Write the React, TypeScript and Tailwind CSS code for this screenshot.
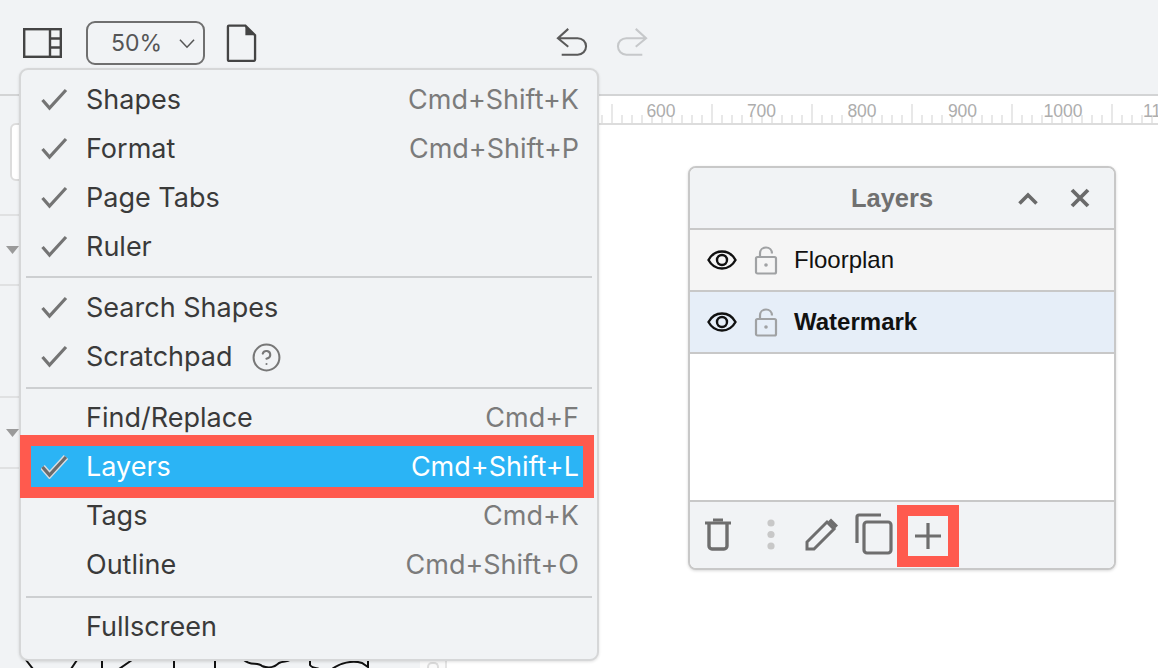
import { CircleHelp } from "lucide-react"

const inter = "font-['Inter',sans-serif]"
const arial = "font-['Liberation_Sans',Arial,sans-serif]"

function Check({ light }: { light?: boolean }) {
  return (
    <svg className="absolute left-[20px] top-[11px]" width="28" height="25" viewBox="0 0 28 25" fill="none">
      {light && <path d="M1.500 13l7 8L25 3" stroke="#d8dde2" strokeWidth="6" />}
      <path d="M1.500 13l7 8L25 3" stroke={light ? "#6b6b6b" : "#747474"} strokeWidth="3.200" />
    </svg>
  )
}

function MenuRow({ label, keys, checked, help }: { label: string; keys?: string; checked?: boolean; help?: boolean }) {
  return (
    <div className="relative flex h-[49px] items-center justify-between pl-[65px] pr-[18px] text-[#3a3a3a]">
      {checked && <Check />}
      <span className="flex items-center gap-[18px]">
        {label}
        {help && <CircleHelp size={31} strokeWidth={1.6} className="text-[#777]" />}
      </span>
      {keys && <span className="text-[#7b7b7b]">{keys}</span>}
    </div>
  )
}

function Separator({ className }: { className: string }) {
  return (
    <div className={`px-[5px] ${className}`}>
      <div className="h-[2px] w-full bg-[#cdcfd1]" />
    </div>
  )
}

function EyeIcon() {
  return (
    <svg width="30" height="22" viewBox="0 0 30 22" fill="none" stroke="#111" strokeWidth="2.400">
      <path d="M1.500 11C4.500 5.500 9.500 2.500 15 2.500S25.500 5.500 28.500 11C25.500 16.500 20.500 19.500 15 19.500S4.500 16.500 1.500 11Z" />
      <circle cx="15" cy="11" r="5" />
    </svg>
  )
}

function LockIcon() {
  return (
    <svg width="24" height="29" viewBox="0 0 24 29" fill="none" stroke="#a0a2a4" strokeWidth="2.200">
      <path d="M6 11V7.500C6 4 8.500 1.500 12 1.500S18 4 18 7.500" />
      <rect x="2" y="11" width="20" height="16.500" rx="1.500" />
      <circle cx="12" cy="19" r="1.800" fill="#a0a2a4" stroke="none" />
    </svg>
  )
}

function LayerRow({ name, active }: { name: string; active?: boolean }) {
  return (
    <div className={`flex h-[62px] items-center border-b-2 border-[#c8c8c8] pl-[17px] ${active ? "bg-[#e6eef8]" : "bg-[#f5f5f5]"}`}>
      <EyeIcon />
      <div className="ml-[17px] mr-[16px] pt-[1px]">
        <LockIcon />
      </div>
      <span className={`text-[24px] text-[#111] ${active ? "font-bold" : ""}`}>{name}</span>
    </div>
  )
}

function Toolbar() {
  return (
    <div className="flex h-[96px] items-start border-b-2 border-[#d3d4d5] bg-[#f1f3f5] pl-[23px]">
      <svg className="mt-[28px]" width="39" height="30" viewBox="0 0 39 30" fill="none" stroke="#444" strokeWidth="2.400">
        <rect x="1.200" y="1.200" width="36.600" height="27.600" />
        <path d="M27 1v28M27 10.500h11M27 19.500h11" />
      </svg>
      <div className={`ml-[24px] mt-[21px] flex h-[44px] w-[119px] items-center rounded-[9px] border-2 border-[#6f6f6f] pl-[23px] text-[23px] text-[#555] ${inter}`}>
        <span>50%</span>
        <svg className="ml-[17px]" width="16" height="11" viewBox="0 0 17 11" fill="none" stroke="#555" strokeWidth="1.600">
          <path d="M1 1.500l7.500 8 7.500-8" />
        </svg>
      </div>
      <svg className="ml-[21px] mt-[23px]" width="31" height="40" viewBox="0 0 32 40" fill="none">
        <path d="M3 2h17l10 10v25a1.500 1.500 0 0 1-1.500 1.500h-25A1.500 1.500 0 0 1 2 37V3a1 1 0 0 1 1-1Z" stroke="#444" strokeWidth="2.400" />
        <path d="M20 2l10 10H20Z" fill="#444" />
      </svg>
      <svg className="ml-[299px] mt-[27px]" width="32" height="30" viewBox="0 0 34 32" fill="none" stroke="#5a5a5a" strokeWidth="2.200">
        <path d="M13 2L2 12l11 9M2 12h21c5 0 9 3.500 9 8.500S28 29.500 23 29.500H6" />
      </svg>
      <svg className="ml-[28px] mt-[27px]" width="32" height="30" viewBox="0 0 34 32" fill="none" stroke="#c6c8ca" strokeWidth="2.200">
        <path d="M21 2l11 10-11 9M32 12H11c-5 0-9 3.500-9 8.500S6 29.500 11 29.500h17" />
      </svg>
    </div>
  )
}

function Ruler() {
  const ticks = Array.from({ length: 72 }, (_, i) => 452 + i * 10)
  const labels = [600, 700, 800, 900, 1000]
  return (
    <div className="h-[29px] border-b-2 border-[#dcdcdc] bg-white">
      <svg width="711" height="27" viewBox="447 0 711 27">
        {ticks.map((x) => {
          const major = (x - 412) % 100 === 0
          return <line key={x} x1={x} x2={x} y1={major ? 8 : 19} y2={27} stroke="#dedede" strokeWidth="1.400" />
        })}
        {labels.map((l, i) => (
          <text key={l} x={661 + i * 100.500} y={21} textAnchor="middle" fontSize="17.500" fill="#adadad" fontFamily="Liberation Sans">
            {l}
          </text>
        ))}
        <text x={1143} y={21} fontSize="17.500" fill="#adadad" fontFamily="Liberation Sans">
          1100
        </text>
      </svg>
    </div>
  )
}

function Sidebar() {
  return (
    <div className="flex h-full w-[420px] flex-col bg-[#f1f3f5]">
      <div className="h-[120px] border-b-2 border-[#e0e1e2] pl-[10px] pt-[27px]">
        <div className="h-[58px] w-[300px] rounded-[6px] border-2 border-[#dcdcdc] bg-white" />
      </div>
      <div className="flex h-[70px] items-center border-b-2 border-[#e0e1e2] pl-[6px]">
        <svg width="13" height="8" viewBox="0 0 13 8"><path d="M0 0h13L6.500 8Z" fill="#9a9a9a" /></svg>
      </div>
      <div className="h-[112px] border-b-2 border-[#e0e1e2]" />
      <div className="flex h-[71px] items-center border-b-2 border-[#e0e1e2] pl-[6px]">
        <svg width="13" height="8" viewBox="0 0 13 8"><path d="M0 0h13L6.500 8Z" fill="#9a9a9a" /></svg>
      </div>
      <div className="flex flex-1 items-end">
        <svg width="420" height="10" viewBox="0 658 420 10" fill="none" stroke="#111" strokeWidth="2">
          <path d="M26 660l7 9M77 660l-6 9M102 660v9M132 660l-13 9M174 660v9M215 660v9" />
          <path d="M244 660c6 6 14 2 18 6 5 2 12 2 17-3 4-2 8-1 11-3" />
          <path d="M310 660v5c2 3 6 3 9 4M332 669c8-6 20-9 30-6l6 4v-7" />
        </svg>
      </div>
    </div>
  )
}

function LayersPanel() {
  return (
    <div className={`absolute left-[688px] top-[166px] flex h-[404px] w-[428px] flex-col overflow-hidden rounded-[8px] border-2 border-[#c8c8c8] bg-white shadow-[0_1px_3px_rgba(0,0,0,0.15)] ${arial}`}>
      <div className="relative flex h-[62px] items-center justify-center border-b-2 border-[#c8c8c8] bg-[#f1f3f5] pr-[20px]">
        <span className="text-[25.500px] font-bold text-[#707070]">Layers</span>
        <svg className="absolute right-[76px] top-[24px]" width="20" height="13" viewBox="0 0 20 13" fill="none" stroke="#6a6a6a" strokeWidth="3.600">
          <path d="M1.500 11.500L10 3l8.500 8.500" />
        </svg>
        <svg className="absolute right-[24px] top-[20px]" width="20" height="20" viewBox="0 0 20 20" fill="none" stroke="#6a6a6a" strokeWidth="3.800">
          <path d="M2 2l16 16M18 2L2 18" />
        </svg>
      </div>
      <LayerRow name="Floorplan" />
      <LayerRow name="Watermark" active />
      <div className="flex-1" />
      <div className="flex h-[68px] items-start border-t-2 border-[#c8c8c8] bg-[#f1f3f5] pl-[14px]">
        <svg className="mt-[14px]" width="28" height="35" viewBox="0 0 28 35" fill="none" stroke="#6e6e6e">
          <path d="M1 7h26" strokeWidth="3" />
          <path d="M9 4h10" strokeWidth="3" />
          <path d="M5 8v22a3 3 0 0 0 3 3h12a3 3 0 0 0 3-3V8" strokeWidth="3.400" />
        </svg>
        <svg className="ml-[35px] mt-[17px]" width="8" height="31" viewBox="0 0 8 31" fill="#c8c8c8">
          <circle cx="4" cy="4" r="3.600" />
          <circle cx="4" cy="15.500" r="3.600" />
          <circle cx="4" cy="27" r="3.600" />
        </svg>
        <svg className="ml-[29px] mt-[15px]" width="36" height="36" viewBox="0 0 36 36" fill="none">
          <path d="M3 25L23 5l7 7-20 20H3Z" stroke="#6e6e6e" strokeWidth="3" />
          <path d="M27 1.500l7 7-3 3-7-7Z" fill="#6e6e6e" />
        </svg>
        <svg className="ml-[15px] mt-[11px]" width="38" height="42" viewBox="0 0 38 42" fill="none" stroke="#6e6e6e" strokeWidth="3.200">
          <path d="M2 30V4a2 2 0 0 1 2-2h22" />
          <rect x="9" y="9" width="27" height="31" rx="3" />
        </svg>
        <div className="ml-[4px] mt-[3px] flex h-[62px] w-[62px] items-center justify-center border-[11px] border-[#ff5a4e]">
          <svg width="28" height="26" viewBox="0 0 28 26" fill="none" stroke="#6e6e6e" strokeWidth="3.200">
            <path d="M14 0v26M1 13h26" />
          </svg>
        </div>
      </div>
    </div>
  )
}

function ViewMenu() {
  return (
    <div className={`absolute left-[19px] top-[68px] h-[593px] w-[580px] rounded-[9px] border-2 border-[#d6d7d8] bg-[#f1f3f5] pt-[6px] text-[27px] shadow-[0_1px_3px_rgba(0,0,0,0.12)] ${inter}`}>
      <MenuRow label="Shapes" keys="Cmd+Shift+K" checked />
      <MenuRow label="Format" keys="Cmd+Shift+P" checked />
      <MenuRow label="Page Tabs" checked />
      <MenuRow label="Ruler" checked />
      <Separator className="h-[12px] pt-[4px]" />
      <MenuRow label="Search Shapes" checked />
      <MenuRow label="Scratchpad" checked help />
      <Separator className="h-[12px] pt-[5px]" />
      <MenuRow label="Find/Replace" keys="Cmd+F" />
      <div className="relative flex h-[49px] items-center justify-between pl-[65px] pr-[18px] text-white">
        <div className="absolute -left-[1px] -top-[8px] h-[63px] w-[574px] border-[11px] border-[#ff5a4e] bg-[#2bb4f5]" />
        <Check light />
        <span className="relative">Layers</span>
        <span className="relative">Cmd+Shift+L</span>
      </div>
      <MenuRow label="Tags" keys="Cmd+K" />
      <MenuRow label="Outline" keys="Cmd+Shift+O" />
      <Separator className="h-[13px] pt-[6px]" />
      <MenuRow label="Fullscreen" />
    </div>
  )
}

export default function App() {
  return (
    <div className="relative h-[668px] w-[1158px] overflow-hidden bg-white">
      <Toolbar />
      <div className="flex h-[572px]">
        <Sidebar />
        <div className="flex w-[27px] items-end justify-center border-r-2 border-[#e4e4e4] bg-[#fafafa]">
          <div className="h-[6px] w-[12px] rounded-t-[5px] border-2 border-b-0 border-[#dcdcdc]" />
        </div>
        <div className="flex-1 bg-white">
          <Ruler />
        </div>
      </div>
      <ViewMenu />
      <LayersPanel />
    </div>
  )
}
